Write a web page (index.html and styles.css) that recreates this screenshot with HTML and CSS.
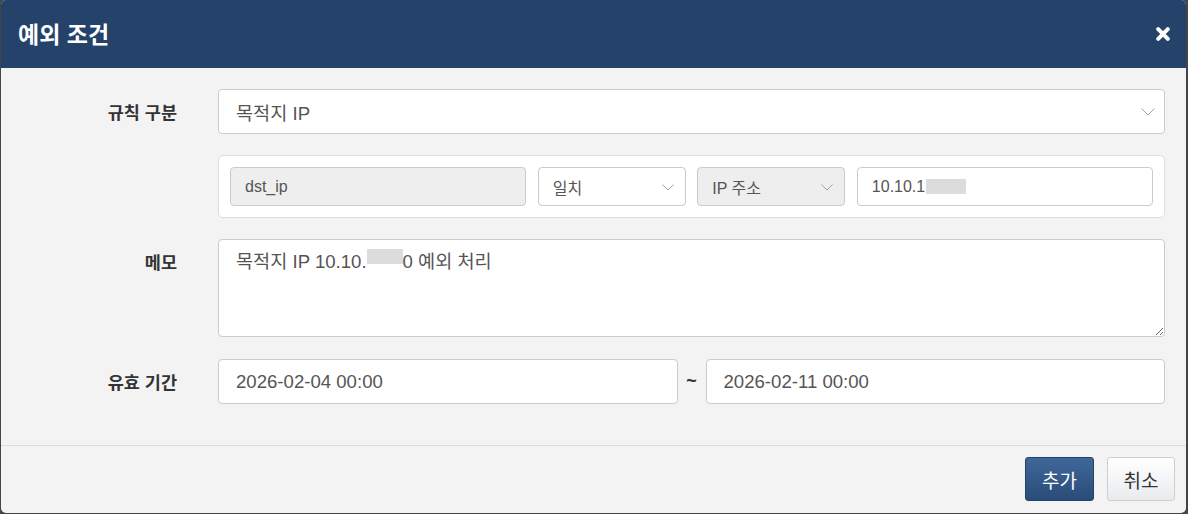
FILE: index.html
```html
<!DOCTYPE html>
<html lang="ko">
<head>
<meta charset="utf-8">
<title>예외 조건</title>
<link rel="stylesheet" href="styles.css">
</head>
<body>
<div class="modal">
  <div class="modal-header">
    <h4 class="modal-title">예외 조건</h4>
    <button class="close" type="button" aria-label="닫기">
      <svg width="14" height="14" viewBox="0 0 14 14"><path d="M2.2 2.2 L11.8 11.8 M11.8 2.2 L2.2 11.8" stroke="#fff" stroke-width="4" stroke-linecap="round" fill="none"/></svg>
    </button>
  </div>
  <div class="modal-body">
    <div class="form-row">
      <label class="form-label">규칙 구분</label>
      <div class="control control-lg select">
        <span>목적지 IP</span>
        <svg class="chev chev-lg" width="14" height="8" viewBox="0 0 14 8"><path d="M0.5 0.5 L7 7 L13.5 0.5" stroke="#a0a0a0" stroke-width="1" fill="none"/></svg>
      </div>
    </div>
    <div class="form-row">
      <div class="form-label"></div>
      <div class="panel">
        <div class="control control-sm readonly">dst_ip</div>
        <div class="control control-sm select">
          <span>일치</span>
          <svg class="chev" width="12" height="7" viewBox="0 0 12 7"><path d="M0.5 0.5 L6 6 L11.5 0.5" stroke="#a0a0a0" stroke-width="1" fill="none"/></svg>
        </div>
        <div class="control control-sm select readonly">
          <span>IP 주소</span>
          <svg class="chev" width="12" height="7" viewBox="0 0 12 7"><path d="M0.5 0.5 L6 6 L11.5 0.5" stroke="#a0a0a0" stroke-width="1" fill="none"/></svg>
        </div>
        <div class="control control-sm">10.10.1<span class="mask mask-ip"></span></div>
      </div>
    </div>
    <div class="form-row">
      <label class="form-label">메모</label>
      <div class="control textarea">목적지 IP 10.10.<span class="mask mask-memo"></span>0 예외 처리</div>
    </div>
    <div class="form-row">
      <label class="form-label">유효 기간</label>
      <div class="date-range">
        <div class="control control-lg">2026-02-04 00:00</div>
        <span class="tilde">~</span>
        <div class="control control-lg">2026-02-11 00:00</div>
      </div>
    </div>
  </div>
  <div class="modal-footer">
    <button class="btn btn-primary" type="button">추가</button>
    <button class="btn btn-default" type="button">취소</button>
  </div>
</div>
</body>
</html>
```
FILE: styles.css
```css
* { box-sizing: border-box; }
html, body { margin: 0; padding: 0; }
body {
  background: #454545;
  font-family: "Liberation Sans", "Noto Sans CJK KR", sans-serif;
  color: #333;
  height: 514px;
  overflow: hidden;
}
.modal {
  margin-left: 1px;
  width: 1185px;
  height: 513px;
  background: #f2f3f2;
  border-radius: 5px;
  overflow: hidden;
  display: flex;
  flex-direction: column;
}
.modal-header {
  height: 68px;
  background: #24426a;
  display: flex;
  align-items: center;
  justify-content: space-between;
  padding: 0 16px 0 17px;
}
.modal-title {
  margin: 0;
  color: #fff;
  font-family: "Noto Sans CJK KR", sans-serif;
  font-weight: 700;
  font-size: 23px;
  line-height: 1;
  padding-bottom: 2px;
}
.close {
  background: none;
  border: 0;
  padding: 0;
  width: 14px;
  height: 14px;
  display: flex;
  cursor: pointer;
}
.modal-body {
  flex: 1;
  padding: 21px 21px 0 0;
  display: flex;
  flex-direction: column;
  gap: 21px;
}
.form-row {
  display: grid;
  grid-template-columns: 176px 1fr;
  column-gap: 41px;
  align-items: start;
}
.form-row:last-child { margin-top: 1px; }
.form-label {
  font-family: "Noto Sans CJK KR", sans-serif;
  font-weight: 700;
  font-size: 17.5px;
  color: #333;
  text-align: right;
  line-height: 45px;
}
.control {
  background: #fff;
  border: 1px solid #cbcbcb;
  border-radius: 4px;
  color: #555;
  display: flex;
  align-items: center;
  position: relative;
  white-space: nowrap;
}
.control-lg {
  height: 45px;
  padding: 0 17px;
  font-size: 18.6px;
}
.control-sm {
  height: 39px;
  padding: 0 14px;
  font-size: 16px;
}
.select { justify-content: space-between; }
.chev { flex: none; margin-right: -3px; margin-top: 1px; }
.chev-lg { margin-right: -8px; }
.readonly { background: #eee; }
.panel {
  background: #fff;
  border: 1px solid #ddd;
  border-radius: 5px;
  padding: 11px;
  display: grid;
  grid-template-columns: 2fr 1fr 1fr 2fr;
  column-gap: 11.5px;
}
.textarea {
  height: 98px;
  align-items: flex-start;
  padding: 9px 17px;
  font-size: 18.6px;
  line-height: 26px;
  resize: both;
  overflow: auto;
}
.mask {
  display: inline-block;
  background: #dcdcdc;
  vertical-align: middle;
}
.mask-ip { width: 40px; height: 15px; margin-left: 1px; }
.mask-memo { width: 36px; height: 15px; }
.date-range {
  display: grid;
  grid-template-columns: 1fr 28px 1fr;
  align-items: center;
}
.tilde {
  text-align: center;
  font-size: 18px;
  font-weight: 700;
  color: #333;
}
.modal-footer {
  border-top: 1px solid #dcdcdc;
  padding: 11px 11px 12px;
  display: flex;
  justify-content: flex-end;
  gap: 13px;
}
.btn {
  height: 44px;
  border-radius: 3px;
  font-family: "Noto Sans CJK KR", sans-serif;
  font-size: 19px;
  padding: 0 12px;
  cursor: pointer;
}
.btn-primary {
  width: 69px;
  color: #fff;
  background: linear-gradient(#3e6899, #2a4c79);
  border: 1px solid #22426a;
}
.btn-default {
  width: 68px;
  color: #333;
  background: linear-gradient(#ffffff, #e8ebee);
  border: 1px solid #cfcfcf;
}
```
